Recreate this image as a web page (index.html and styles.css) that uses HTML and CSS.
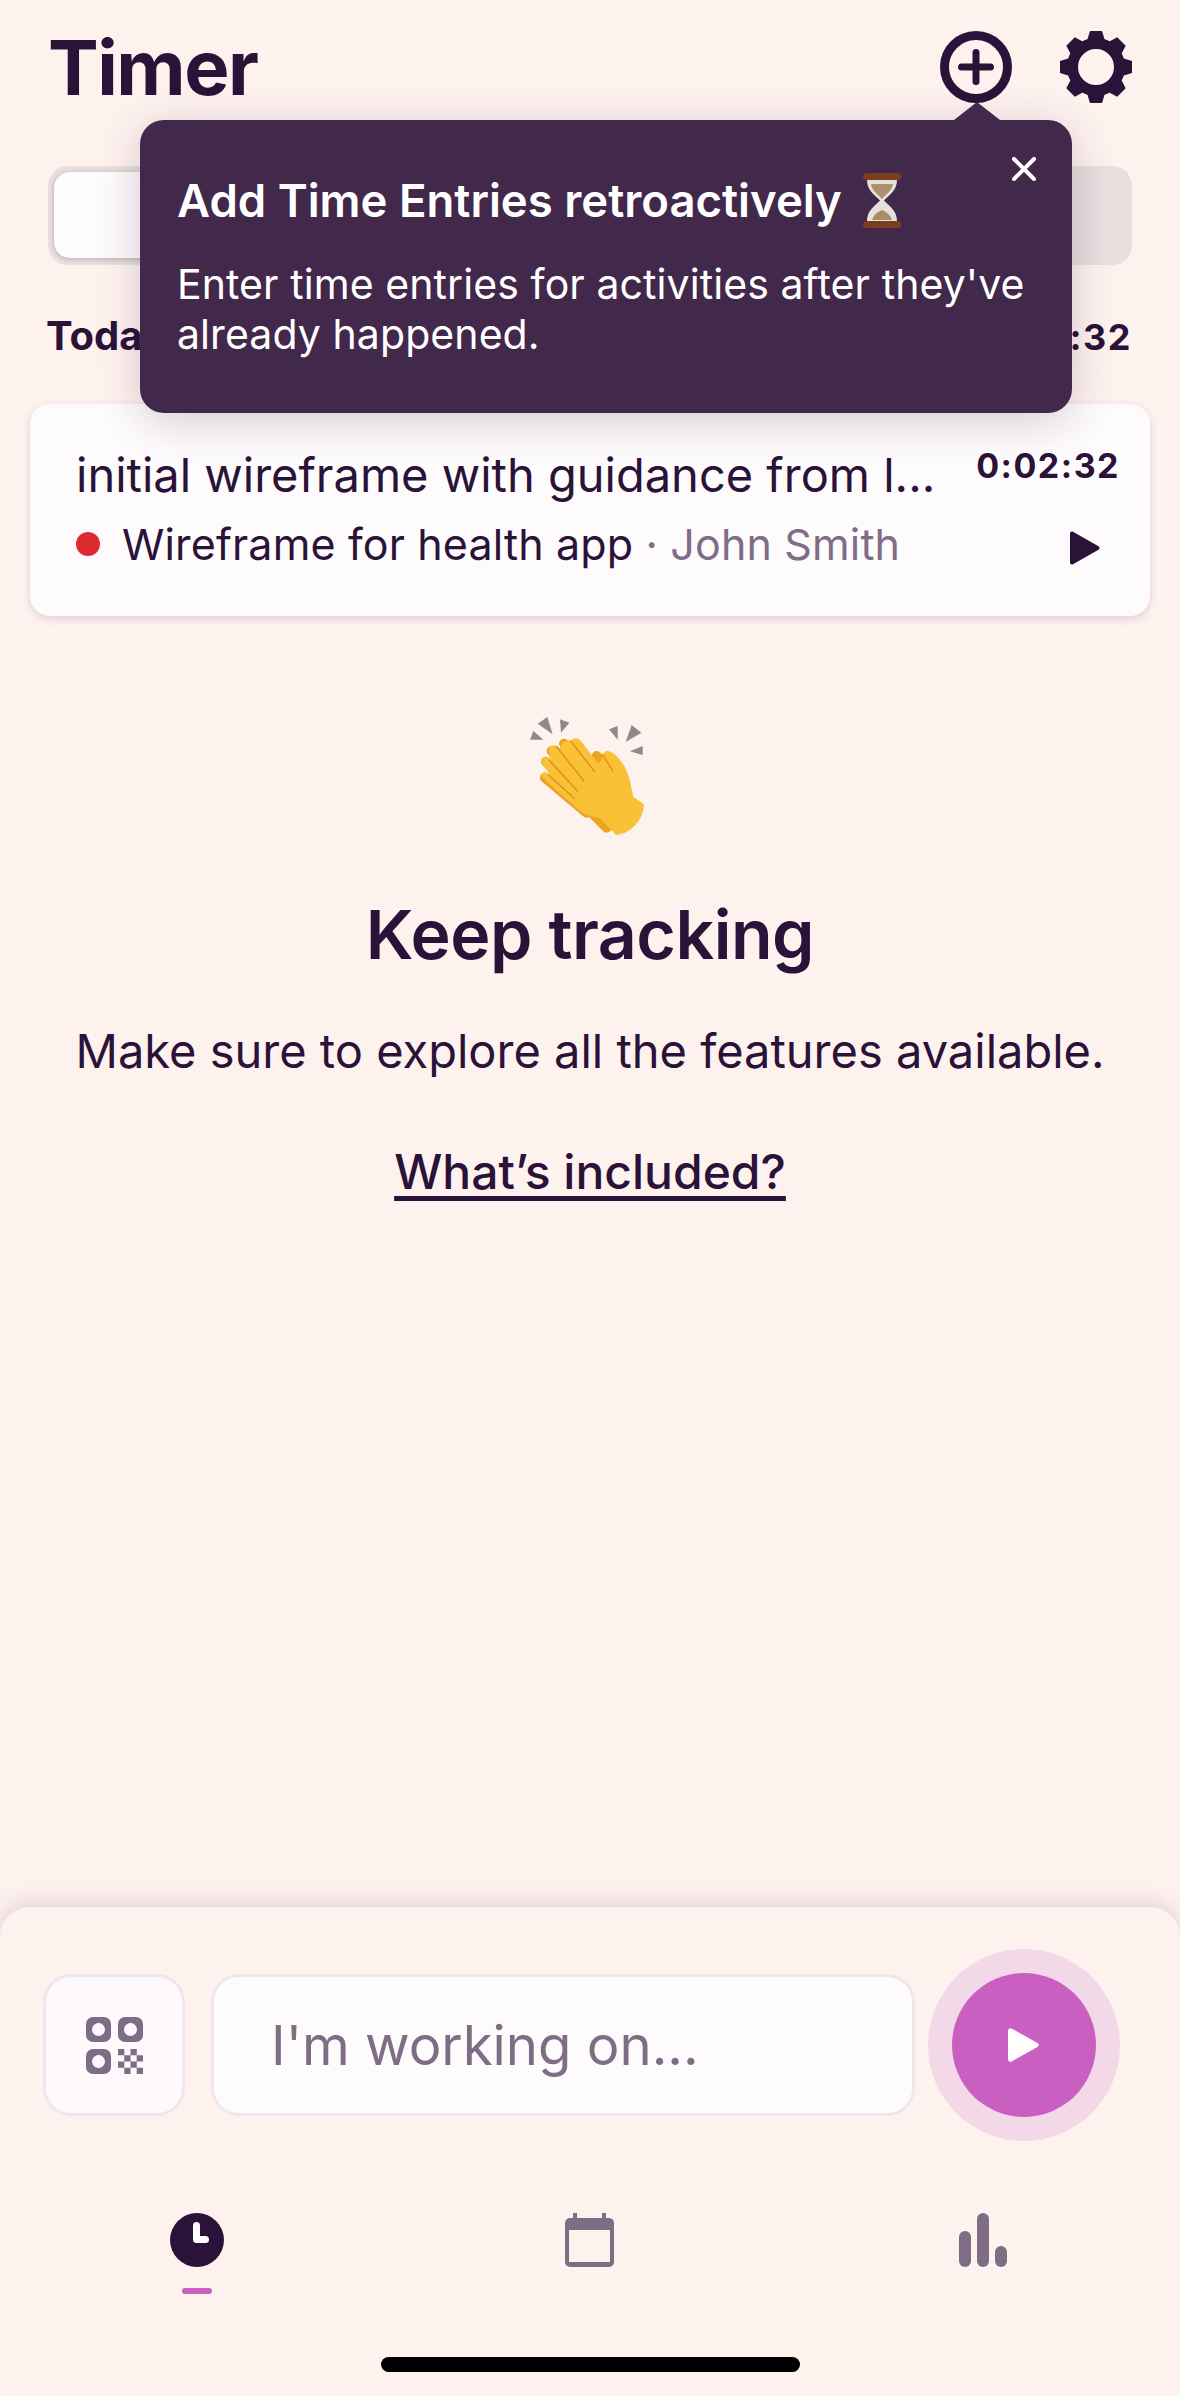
FILE: index.html
```html
<!DOCTYPE html>
<html lang="en">
<head>
<meta charset="utf-8">
<title>Timer</title>
<link rel="stylesheet" href="styles.css">
</head>
<body>
<div class="app">
  <header class="header">
    <h1 class="title">Timer</h1>
    <div class="header-actions">
      <svg class="icon-72" viewBox="0 0 72 72"><circle cx="36" cy="36" r="31.5" fill="none" stroke="#2b1238" stroke-width="9"/><path d="M21.500 36H50.500M36 21.500V50.500" stroke="#2b1238" stroke-width="7" stroke-linecap="round"/></svg>
      <svg class="icon-72" viewBox="0 0 72 72"><g fill="#2b1238"><polygon points="30,0 42,0 46,13 26,13"/><polygon points="30,0 42,0 46,13 26,13" transform="rotate(45 36 36)"/><polygon points="30,0 42,0 46,13 26,13" transform="rotate(90 36 36)"/><polygon points="30,0 42,0 46,13 26,13" transform="rotate(135 36 36)"/><polygon points="30,0 42,0 46,13 26,13" transform="rotate(180 36 36)"/><polygon points="30,0 42,0 46,13 26,13" transform="rotate(225 36 36)"/><polygon points="30,0 42,0 46,13 26,13" transform="rotate(270 36 36)"/><polygon points="30,0 42,0 46,13 26,13" transform="rotate(315 36 36)"/></g><circle cx="36" cy="36" r="23.500" fill="none" stroke="#2b1238" stroke-width="11"/></svg>
    </div>
  </header>

  <div class="segment"><div class="segment-thumb"></div></div>

  <div class="day-row"><span>Today</span><span class="day-total">0:02:32</span></div>

  <article class="card">
    <div class="card-main">
      <div class="card-title">initial wireframe with guidance from l...</div>
      <div class="card-meta"><span class="dot"></span><span>Wireframe for health app</span><span class="client"> · John Smith</span></div>
    </div>
    <div class="card-side">
      <span class="card-time">0:02:32</span>
      <svg class="card-play" viewBox="0 0 31 34"><path d="M1 2.500C1 .8 2.600 0 4 .8L29.500 15.300C31 16.200 31 17.800 29.500 18.700L4 33.200C2.600 34 1 33.200 1 31.500Z" fill="#2b1238"/></svg>
    </div>
  </article>

  <section class="empty">
    <svg class="clap" viewBox="0 0 540 480">
      <g fill="#8c8a8c">
        <polygon points="113,98 142,78 158,130"/><polygon points="180,85 208,95 183,125"/><polygon points="90,146 100,120 130,146"/>
        <polygon points="327,115 353,105 353,146"/><polygon points="377,153 395,102 424,125"/><polygon points="390,181 428,165 428,192"/>
      </g>
      <g stroke="#eaa520" stroke-width="30" stroke-linecap="round" fill="none">
        <path d="M155 180L250 290"/><path d="M192 158L290 270"/><path d="M290 195L330 250"/><path d="M138 212L240 320"/>
        <path d="M135 260L260 365"/><path d="M280 370L320 410"/>
      </g>
      <path d="M212 150C222 136 238 142 248 156L290 213C300 222 306 205 312 185C320 175 336 182 350 196C372 218 386 245 392 280L400 318L432 340C430 385 395 428 348 432L300 382L250 368L165 295L130 262C116 246 132 238 148 250L130 222C118 205 136 192 152 205L146 178C150 160 168 158 180 172C186 150 202 146 212 150Z" fill="#fac036"/>
      <g stroke="#d98f1d" stroke-width="4" stroke-linecap="round" fill="none">
        <path d="M212 150L284 242"/><path d="M170 168L252 270"/><path d="M148 208L232 300"/><path d="M146 252L222 322"/><path d="M308 190L338 240"/>
      </g>
    </svg>
    <h2 class="empty-title">Keep tracking</h2>
    <p class="empty-text">Make sure to explore all the features available.</p>
    <a class="empty-link" href="#">What’s included?</a>
  </section>

  <footer class="sheet">
    <div class="composer">
      <button class="qr-btn">
        <svg class="qr" viewBox="0 0 57 57">
          <g fill="#7f6d85">
            <rect width="25" height="25" rx="7"/><rect x="32" width="25" height="25" rx="7"/><rect y="32" width="25" height="25" rx="7"/>
            <path d="M32 32h6.300v6.300H32zM44.500 32h6.300v6.300H44.500zM38.300 38.300h6.300v6.300H38.300zM50.700 38.300H57v6.300H50.700zM32 44.500h6.300v6.300H32zM44.500 44.500h6.300v6.300H44.500zM38.300 50.700h6.300V57H38.300zM50.700 50.700H57V57H50.700z"/>
          </g>
          <g fill="#fdf9fc"><circle cx="12.500" cy="12.500" r="6.500"/><circle cx="44.500" cy="12.500" r="6.500"/><circle cx="12.500" cy="44.500" r="6.500"/></g>
        </svg>
      </button>
      <div class="input">I'm working on...</div>
      <button class="start">
        <svg class="start-icon" viewBox="0 0 31 34"><path d="M0 3C0 .5 2.500-.8 4.500 1L29.500 15C31.200 16 31.200 18 29.500 19L4.500 33C2.500 34.800 0 33.500 0 31Z" fill="#fff"/></svg>
      </button>
    </div>
    <nav class="tabs">
      <div class="tab">
        <svg class="tab-icon" viewBox="0 0 54 54"><circle cx="27" cy="27" r="27" fill="#2b1238"/><path d="M26.500 12.500V26.500H35.500" fill="none" stroke="#fff" stroke-width="7" stroke-linecap="round" stroke-linejoin="round"/></svg>
        <span class="tab-mark"></span>
      </div>
      <div class="tab">
        <svg class="tab-icon" viewBox="0 0 49 54"><rect x="8" width="4" height="8" fill="#7f6d85"/><rect x="37" width="4" height="8" fill="#7f6d85"/><rect y="5" width="49" height="49" rx="5" fill="#7f6d85"/><rect x="4" y="17" width="41" height="32" fill="#fef2ef"/></svg>
      </div>
      <div class="tab">
        <svg class="tab-icon" viewBox="0 0 48 54"><g fill="#7f6d85"><rect y="18" width="12" height="36" rx="6"/><rect x="18" width="12" height="54" rx="6"/><rect x="36" y="33" width="12" height="21" rx="6"/></g></svg>
      </div>
    </nav>
    <div class="home-indicator"></div>
  </footer>

  <aside class="tooltip">
    <svg class="tooltip-close" viewBox="0 0 24 24"><path d="M2 2L22 22M22 2L2 22" stroke="#fff" stroke-width="4" stroke-linecap="round"/></svg>
    <h3 class="tooltip-title">Add Time Entries retroactively
      <svg class="hourglass" viewBox="0 0 38 55">
        <path d="M4 7H34C34 18 26 22 21 27.500C26 33 34 37 34 48H4C4 37 12 33 17 27.500C12 22 4 18 4 7Z" fill="#e4e0de"/>
        <path d="M8 11H30C29 18 23 21 19 26C15 21 9 18 8 11Z" fill="#ac9070"/>
        <path d="M9 47C11 41 15 39 19 37C23 39 27 41 29 47Z" fill="#a98c6a"/>
        <rect width="38" height="7" rx="3.500" fill="#7c3f1d"/><rect y="48" width="38" height="7" rx="3.500" fill="#7c3f1d"/>
      </svg>
    </h3>
    <p class="tooltip-text">Enter time entries for activities after they've already happened.</p>
  </aside>
</div>
</body>
</html>
```

FILE: styles.css
```css
* { box-sizing: border-box; }

html, body {
  margin: 0;
  padding: 0;
}

body {
  background: #fef2ef;
  color: #2b1238;
  font-family: Inter, "Liberation Sans", sans-serif;
}

.app {
  position: relative;
  display: flex;
  flex-direction: column;
  width: 1180px;
  height: 2396px;
  overflow: hidden;
}

.header {
  display: flex;
  justify-content: space-between;
  align-items: center;
  padding: 31px 48px 0 48px;
}

.title {
  margin: 0;
  font-size: 76px;
  line-height: 72px;
  font-weight: 700;
  letter-spacing: -1.500px;
}

.header-actions {
  display: flex;
  gap: 48px;
}

.icon-72 {
  display: block;
  width: 72px;
  height: 72px;
}

.segment {
  height: 99px;
  margin: 63px 48px 0;
  padding: 6px 6px 7px;
  background: #e8dfdf;
  border-radius: 20px;
}

.segment-thumb {
  width: 50%;
  height: 100%;
  background: #fefbfc;
  border-radius: 16px;
  box-shadow: 0 1px 5px rgba(60, 30, 60, 0.28);
}

.day-row {
  display: flex;
  justify-content: space-between;
  align-items: baseline;
  margin-top: 47px;
  padding: 0 48px 0 46px;
  font-size: 40px;
  line-height: 48px;
  font-weight: 700;
}

.day-total {
  font-size: 36px;
  letter-spacing: 1.500px;
}

.card {
  display: flex;
  justify-content: space-between;
  height: 212px;
  margin: 43px 30px 0;
  padding: 43px 30px 0 46px;
  background: #fefbfc;
  border-radius: 20px;
  box-shadow: 0 3px 8px rgba(60, 30, 60, 0.16);
}

.card-title {
  font-size: 47px;
  line-height: 56px;
  font-weight: 400;
  white-space: nowrap;
}

.card-meta {
  display: flex;
  align-items: center;
  margin-top: 15px;
  font-size: 43px;
  line-height: 52px;
  letter-spacing: 0.150px;
  white-space: pre;
}

.dot {
  width: 24px;
  height: 24px;
  margin-right: 22px;
  background: #dc2a2e;
  border-radius: 50%;
}

.client {
  color: #7f6d85;
}

.card-side {
  display: flex;
  flex-direction: column;
  align-items: flex-end;
}

.card-time {
  margin-top: -3px;
  font-size: 34px;
  line-height: 44px;
  font-weight: 700;
  letter-spacing: 1.500px;
}

.card-play {
  width: 31px;
  height: 34px;
  margin: 43px 20px 0 0;
}

.empty {
  display: flex;
  flex-direction: column;
  align-items: center;
  margin-top: 75px;
}

.clap {
  display: block;
  width: 180px;
  height: 160px;
}

.empty-title {
  margin: 43px 0 0;
  font-size: 68px;
  line-height: 80px;
  font-weight: 600;
  letter-spacing: -0.500px;
}

.empty-text {
  margin: 49px 0 0;
  font-size: 47px;
  line-height: 56px;
}

.empty-link {
  margin-top: 65px;
  color: #2b1238;
  font-size: 48px;
  line-height: 56px;
  font-weight: 500;
  text-decoration: underline;
  text-decoration-thickness: 5px;
  text-underline-offset: 7px;
}

.sheet {
  display: flex;
  flex-direction: column;
  margin-top: auto;
  height: 489px;
  padding-top: 42px;
  background: #fef2ef;
  border-radius: 30px 30px 0 0;
  box-shadow: 0 -5px 22px rgba(60, 30, 60, 0.14);
}

.composer {
  display: flex;
  align-items: center;
  padding: 0 60px 0 43px;
}

.qr-btn {
  display: flex;
  align-items: center;
  justify-content: center;
  width: 142px;
  height: 142px;
  padding: 0;
  background: #fdf9fc;
  border: 3px solid #efe7ec;
  border-radius: 28px;
}

.qr {
  width: 57px;
  height: 57px;
}

.input {
  flex: 1;
  height: 142px;
  margin: 0 13px 0 26px;
  padding: 0 0 0 57px;
  background: #fefbfd;
  border: 3px solid #efe7ec;
  border-radius: 28px;
  color: #7f6d85;
  font-size: 54.500px;
  line-height: 136px;
}

.start {
  display: flex;
  align-items: center;
  justify-content: center;
  width: 144px;
  height: 144px;
  margin: 24px;
  padding: 0;
  background: #c95fc0;
  border: 0;
  border-radius: 50%;
  box-shadow: 0 0 0 24px #f3d8e8;
}

.start-icon {
  width: 31px;
  height: 34px;
  margin-right: 1px;
}

.tabs {
  display: grid;
  grid-template-columns: repeat(3, 1fr);
  margin-top: 72px;
}

.tab {
  display: flex;
  flex-direction: column;
  align-items: center;
  height: 81px;
}

.tab-icon {
  display: block;
  height: 54px;
}

.tab-mark {
  width: 30px;
  height: 6px;
  margin-top: 21px;
  background: #c95fc0;
  border-radius: 3px;
}

.home-indicator {
  align-self: center;
  width: 419px;
  height: 15px;
  margin-top: 63px;
  background: #000;
  border-radius: 8px;
}

.tooltip {
  position: absolute;
  top: 120px;
  left: 140px;
  width: 932px;
  height: 293px;
  padding: 53px 37px 0;
  background: #42284a;
  border-radius: 24px;
  color: #fff;
  box-shadow: 0 8px 44px rgba(40, 20, 50, 0.2);
}

.tooltip::before {
  content: "";
  position: absolute;
  top: -18px;
  left: 814px;
  width: 46px;
  height: 18px;
  background: #42284a;
  clip-path: polygon(50% 0, 100% 100%, 0 100%);
}

.tooltip-close {
  position: absolute;
  top: 37px;
  left: 872px;
  width: 24px;
  height: 24px;
}

.tooltip-title {
  margin: 0;
  font-size: 45.500px;
  line-height: 52px;
  font-weight: 600;
  white-space: nowrap;
}

.hourglass {
  width: 38px;
  height: 55px;
  margin-left: 10px;
  vertical-align: -11px;
}

.tooltip-text {
  margin: 31px 0 0;
  font-size: 41px;
  line-height: 50px;
  letter-spacing: 0.080px;
}
```
